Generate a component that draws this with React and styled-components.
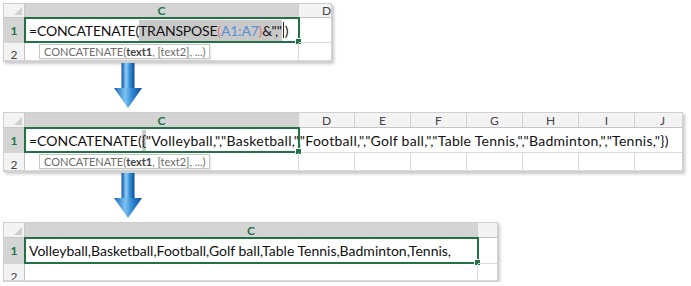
import React from 'react';
import styled, { createGlobalStyle } from 'styled-components';

const GREEN = '#217346';
const FONT = 'Lato, "Liberation Sans", sans-serif';

const Global = createGlobalStyle`
  html, body { margin: 0; padding: 0; background: #fff; }
  body { font-family: ${FONT}; }
`;

const Page = styled.div`
  display: flex;
  flex-direction: column;
  align-items: flex-start;
  padding: 3px 0 0 3px;
`;

const Sheet = styled.div`
  display: grid;
  width: ${p => p.$width}px;
  box-sizing: border-box;
  grid-template-columns: ${p => p.$cols};
  grid-template-rows: ${p => p.$rows};
  border: 1px solid #cfcfcf;
  box-shadow: 2px 2px 3px rgba(0, 0, 0, 0.22);
  background: #fff;
  overflow: hidden;
  margin-top: ${p => p.$mt || 0}px;
`;

const Corner = styled.div`
  position: relative;
  background: #f3f3f3;
  border-right: 1px solid #c9c9c9;
  border-bottom: 1px solid #c9c9c9;
  &::after {
    content: '';
    position: absolute;
    right: 2px;
    bottom: 2px;
    border-left: 8px solid transparent;
    border-bottom: 8px solid #d0d0d0;
  }
`;

const ColHeader = styled.div`
  display: flex;
  align-items: center;
  justify-content: center;
  overflow: hidden;
  background: ${p => (p.$sel ? '#d4d4d4' : '#f3f3f3')};
  color: ${p => (p.$sel ? GREEN : '#444')};
  font-weight: ${p => (p.$sel ? 700 : 400)};
  font-size: 12px;
  border-right: 1px solid #d0d0d0;
  border-bottom: 1px solid #c4c4c4;
`;

const RowHeader = styled.div`
  overflow: hidden;
  text-align: center;
  line-height: ${p => p.$lh}px;
  background: ${p => (p.$sel ? '#d4d4d4' : '#f3f3f3')};
  color: ${p => (p.$sel ? GREEN : '#444')};
  font-weight: ${p => (p.$sel ? 700 : 400)};
  font-size: 12px;
  border-right: 1px solid #c4c4c4;
  border-bottom: 1px solid #d6d6d6;
`;

const Cell = styled.div`
  position: relative;
  border-right: 1px solid #dadada;
  border-bottom: 1px solid #dadada;
`;

const EditCell = styled.div`
  position: relative;
  grid-column: span ${p => p.$span || 1};
  display: flex;
  align-items: center;
  padding-left: 4px;
  font-size: 14px;
  letter-spacing: ${p => p.$ls || 0}px;
  color: #111;
  white-space: nowrap;
  border-right: 1px solid #dadada;
  border-bottom: 1px solid #dadada;
`;

const Spread = styled.span`
  letter-spacing: 0.28px;
`;

const Selection = styled.div`
  position: absolute;
  left: -1px;
  top: -1px;
  bottom: -1px;
  width: ${p => p.$w}px;
  border: 2px solid ${GREEN};
  box-sizing: border-box;
  pointer-events: none;
  &::after {
    content: '';
    position: absolute;
    right: -4px;
    bottom: -4px;
    width: 5px;
    height: 5px;
    background: ${GREEN};
    border: 1px solid #fff;
  }
`;

const Hl = styled.span`
  background: #c9c9c9;
  padding: 2px 0;
`;

const Ref = styled.span`
  color: #5b8ed6;
`;

const Paren = styled.span`
  color: #de7676;
`;

const Caret = styled.span`
  display: inline-block;
  width: 1px;
  height: 16px;
  background: #222;
  vertical-align: middle;
  margin: 0 1px;
`;

const Tip = styled.div`
  position: absolute;
  left: 14px;
  top: 1px;
  height: 13px;
  padding: 0 4px;
  border: 1px solid #c6c6c6;
  background: #fff;
  box-shadow: 1px 1px 2px rgba(0, 0, 0, 0.12);
  font-size: 11px;
  letter-spacing: 0px;
  line-height: 13px;
  color: #6b6b6b;
  white-space: nowrap;
  z-index: 2;
  b {
    color: #444;
  }
`;

const ArrowWrap = styled.div`
  margin-left: 110px;
  margin-top: ${p => p.$mt}px;
  height: 45px;
  width: 30px;
`;

function Arrow({ id, mt }) {
  return (
    <ArrowWrap $mt={mt}>
      <svg width="30" height="45" viewBox="0 0 30 45">
        <defs>
          <linearGradient id={id} x1="0" x2="1" y1="0" y2="0">
            <stop offset="0" stopColor="#0b4f9e" />
            <stop offset="0.35" stopColor="#8fd0f6" />
            <stop offset="0.6" stopColor="#3d95dc" />
            <stop offset="1" stopColor="#0a4c98" />
          </linearGradient>
          <linearGradient id={id + 'h'} x1="0" x2="1" y1="0" y2="0">
            <stop offset="0" stopColor="#1766b8" />
            <stop offset="0.4" stopColor="#7cc2f0" />
            <stop offset="0.65" stopColor="#2f86d3" />
            <stop offset="1" stopColor="#0a4c98" />
          </linearGradient>
        </defs>
        <rect x="8.5" y="0" width="13" height="26" fill={`url(#${id})`} />
        <polygon points="1,25 29,25 15,45" fill={`url(#${id}h)`} />
      </svg>
    </ArrowWrap>
  );
}

const tip = (
  <Tip>
    CONCATENATE(<b>text1</b>, [text2], ...)
  </Tip>
);

export default function App() {
  return (
    <Page>
      <Global />
      <Sheet $width={329} $cols="21px 274px 56px" $rows="14px 25px 18px">
        <Corner />
        <ColHeader $sel>C</ColHeader>
        <ColHeader>D</ColHeader>

        <RowHeader $sel $lh={25}>1</RowHeader>
        <EditCell $ls={-0.2}>
          <Selection $w={276} />
          =CONCATENATE(<Hl>TRANSPOSE<Paren>(</Paren><Ref>A1:A7</Ref><Paren>)</Paren>&amp;","</Hl><Caret />)
        </EditCell>
        <Cell />

        <RowHeader $lh={23}>2</RowHeader>
        <Cell>{tip}</Cell>
        <Cell />
      </Sheet>

      <Arrow id="a1" mt={1} />

      <Sheet $width={680} $mt={4} $cols="21px 274px repeat(7, 56px)" $rows="15px 25px 18px">
        <Corner />
        <ColHeader $sel>C</ColHeader>
        {['D', 'E', 'F', 'G', 'H', 'I', 'J'].map(c => (
          <ColHeader key={c}>{c}</ColHeader>
        ))}

        <RowHeader $sel $lh={25}>1</RowHeader>
        <EditCell $span={8}>
          <Selection $w={276} />
          =CONCATENATE(<Hl>{'{'}</Hl>
          <Spread>"Volleyball,","Basketball,","Football,","Golf ball,","Table Tennis,","Badminton,","Tennis,"{'})'}</Spread>
        </EditCell>

        <RowHeader $lh={23}>2</RowHeader>
        <Cell>{tip}</Cell>
        {['D', 'E', 'F', 'G', 'H', 'I', 'J'].map(c => (
          <Cell key={c} />
        ))}
      </Sheet>

      <Arrow id="a2" mt={1} />

      <Sheet $width={495} $mt={4} $cols="21px 453px 56px" $rows="15px 26px 17px">
        <Corner />
        <ColHeader $sel>C</ColHeader>
        <ColHeader />

        <RowHeader $sel $lh={26}>1</RowHeader>
        <EditCell>
          <Selection $w={455} />
          Volleyball,Basketball,Football,Golf ball,Table Tennis,Badminton,Tennis,
        </EditCell>
        <Cell />

        <RowHeader $lh={26}>2</RowHeader>
        <Cell />
        <Cell />
      </Sheet>
    </Page>
  );
}
